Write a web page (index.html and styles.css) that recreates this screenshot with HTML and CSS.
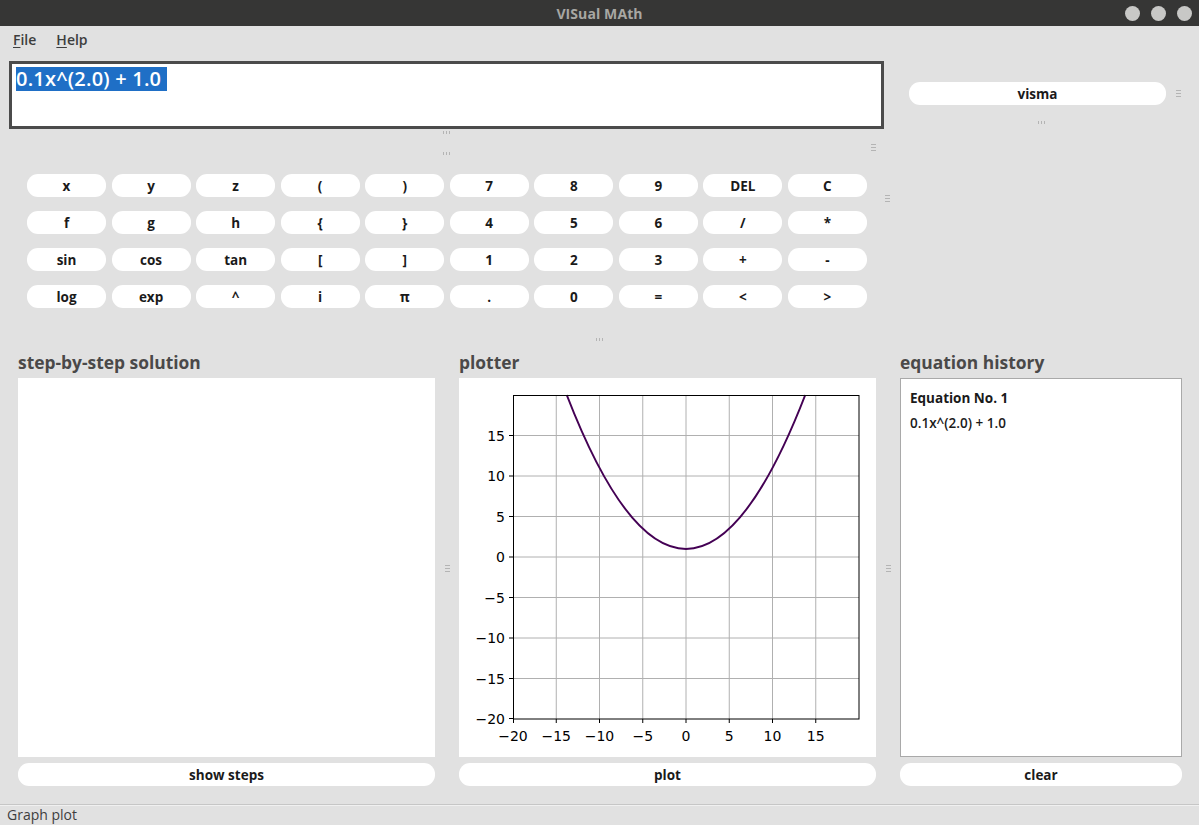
FILE: index.html
```html
<!DOCTYPE html>
<html>
<head>
<meta charset="utf-8">
<title>VISual MAth</title>
<link rel="stylesheet" href="styles.css">
</head>
<body>
<div class="window">
  <header class="titlebar">
    <span></span>
    <span class="title">VISual MAth</span>
    <span class="winbtns"><i></i><i></i><i></i></span>
  </header>
  <nav class="menubar">
    <span class="menu"><u>F</u>ile</span>
    <span class="menu"><u>H</u>elp</span>
  </nav>

  <section class="top">
    <div class="inputbox"><span class="sel">0.1x^(2.0) + 1.0 </span></div>
    <div class="side">
      <div class="siderow">
        <button class="btn visma">visma</button>
        <span class="grip-v"></span>
      </div>
      <span class="grip-h side-grip"></span>
    </div>
  </section>
  <div class="midrow">
    <div class="grips-mid"><span class="grip-h"></span><span class="grip-h"></span></div>
    <span class="grip-v mid-right"></span>
  </div>

  <section class="keyrow">
    <div class="keypad">
      <button class="btn key">x</button><button class="btn key">y</button><button class="btn key">z</button><button class="btn key">(</button><button class="btn key">)</button><button class="btn key">7</button><button class="btn key">8</button><button class="btn key">9</button><button class="btn key">DEL</button><button class="btn key">C</button>
      <button class="btn key">f</button><button class="btn key">g</button><button class="btn key">h</button><button class="btn key">{</button><button class="btn key">}</button><button class="btn key">4</button><button class="btn key">5</button><button class="btn key">6</button><button class="btn key">/</button><button class="btn key">*</button>
      <button class="btn key">sin</button><button class="btn key">cos</button><button class="btn key">tan</button><button class="btn key">[</button><button class="btn key">]</button><button class="btn key">1</button><button class="btn key">2</button><button class="btn key">3</button><button class="btn key">+</button><button class="btn key">-</button>
      <button class="btn key">log</button><button class="btn key">exp</button><button class="btn key">^</button><button class="btn key">i</button><button class="btn key">π</button><button class="btn key">.</button><button class="btn key">0</button><button class="btn key">=</button><button class="btn key">&lt;</button><button class="btn key">&gt;</button>
    </div>
    <span class="grip-v key-grip"></span>
  </section>

  <div class="hsplit"><span class="grip-h"></span></div>

  <section class="panels">
    <div class="col wide">
      <h2 class="heading">step-by-step solution</h2>
      <div class="panel"></div>
      <button class="btn action">show steps</button>
    </div>
    <div class="vsplit"><span class="grip-v"></span></div>
    <div class="col wide">
      <h2 class="heading">plotter</h2>
      <div class="panel">
        <svg class="plot" width="417" height="379" viewBox="0 0 417 379" xmlns="http://www.w3.org/2000/svg">
          <g stroke="#b0b0b0" stroke-width="1">
            <line x1="97.25" y1="17" x2="97.25" y2="341"/>
            <line x1="140.5" y1="17" x2="140.5" y2="341"/>
            <line x1="183.75" y1="17" x2="183.75" y2="341"/>
            <line x1="227" y1="17" x2="227" y2="341"/>
            <line x1="270.25" y1="17" x2="270.25" y2="341"/>
            <line x1="313.5" y1="17" x2="313.5" y2="341"/>
            <line x1="356.75" y1="17" x2="356.75" y2="341"/>
            <line x1="54" y1="57.5" x2="400" y2="57.5"/>
            <line x1="54" y1="98" x2="400" y2="98"/>
            <line x1="54" y1="138.5" x2="400" y2="138.5"/>
            <line x1="54" y1="179" x2="400" y2="179"/>
            <line x1="54" y1="219.5" x2="400" y2="219.5"/>
            <line x1="54" y1="260" x2="400" y2="260"/>
            <line x1="54" y1="300.5" x2="400" y2="300.5"/>
          </g>
          <path d="M107.77 17 Q227 324.8 346.23 17" fill="none" stroke="#440154" stroke-width="2"/>
          <rect x="54.5" y="17.5" width="345.5" height="323.5" fill="none" stroke="#000" stroke-width="1"/>
          <g stroke="#000" stroke-width="1">
            <line x1="54.5" y1="341" x2="54.5" y2="345"/>
            <line x1="97.25" y1="341" x2="97.25" y2="345"/>
            <line x1="140.5" y1="341" x2="140.5" y2="345"/>
            <line x1="183.75" y1="341" x2="183.75" y2="345"/>
            <line x1="227" y1="341" x2="227" y2="345"/>
            <line x1="270.25" y1="341" x2="270.25" y2="345"/>
            <line x1="313.5" y1="341" x2="313.5" y2="345"/>
            <line x1="356.75" y1="341" x2="356.75" y2="345"/>
            <line x1="50" y1="57.5" x2="54" y2="57.5"/>
            <line x1="50" y1="98" x2="54" y2="98"/>
            <line x1="50" y1="138.5" x2="54" y2="138.5"/>
            <line x1="50" y1="179" x2="54" y2="179"/>
            <line x1="50" y1="219.5" x2="54" y2="219.5"/>
            <line x1="50" y1="260" x2="54" y2="260"/>
            <line x1="50" y1="300.5" x2="54" y2="300.5"/>
            <line x1="50" y1="340.5" x2="54" y2="340.5"/>
          </g>
          <g class="ticklabel" text-anchor="end">
            <text x="46" y="62.5">15</text>
            <text x="46" y="103">10</text>
            <text x="46" y="143.5">5</text>
            <text x="46" y="184">0</text>
            <text x="46" y="224.5">−5</text>
            <text x="46" y="265">−10</text>
            <text x="46" y="305.5">−15</text>
            <text x="46" y="346">−20</text>
          </g>
          <g class="ticklabel" text-anchor="middle">
            <text x="54" y="363">−20</text>
            <text x="97.25" y="363">−15</text>
            <text x="140.5" y="363">−10</text>
            <text x="183.75" y="363">−5</text>
            <text x="227" y="363">0</text>
            <text x="270.25" y="363">5</text>
            <text x="313.5" y="363">10</text>
            <text x="356.75" y="363">15</text>
          </g>
        </svg>
      </div>
      <button class="btn action">plot</button>
    </div>
    <div class="vsplit"><span class="grip-v"></span></div>
    <div class="col narrow">
      <h2 class="heading">equation history</h2>
      <div class="panel history">
        <p class="hist-title">Equation No. 1</p>
        <p class="hist-eq">0.1x^(2.0) + 1.0</p>
      </div>
      <button class="btn action">clear</button>
    </div>
  </section>

  <footer class="statusbar">Graph plot</footer>
</div>
</body>
</html>
```

FILE: styles.css
```css
* { box-sizing: border-box; }
html, body {
  margin: 0;
  padding: 0;
  width: 1199px;
  height: 825px;
  overflow: hidden;
  background: #e1e1e1;
}
body {
  font-family: "Open Sans", "DejaVu Sans", sans-serif;
  color: #1c1c1c;
}
.window {
  display: flex;
  flex-direction: column;
  height: 825px;
}
.titlebar {
  height: 26px;
  flex: none;
  background: #363635;
  display: grid;
  grid-template-columns: 1fr auto 1fr;
  align-items: center;
}
.title {
  color: #a8a7a3;
  font-weight: 700;
  font-size: 14px;
  letter-spacing: 0.1px;
}
.winbtns {
  justify-self: end;
  display: flex;
  gap: 11px;
  padding-right: 7px;
}
.winbtns i {
  display: block;
  width: 15px;
  height: 15px;
  border-radius: 50%;
  background: #c8c8c6;
}
.menubar {
  height: 26px;
  flex: none;
  display: flex;
  align-items: center;
  padding-left: 13px;
  gap: 20px;
  font-size: 14px;
  font-weight: 600;
  color: #3d3d3d;
}
.menu u { text-decoration: underline; text-underline-offset: 2px; }

/* splitter grips */
.grip-v {
  display: block;
  flex: none;
  width: 5px;
  height: 7px;
  background: repeating-linear-gradient(to bottom, #b4b4b4 0 1px, transparent 1px 3px);
}
.grip-h {
  display: block;
  flex: none;
  width: 7px;
  height: 3px;
  background: repeating-linear-gradient(to right, #b4b4b4 0 1px, transparent 1px 3px);
}

.top {
  flex: none;
  display: flex;
  margin-top: 9px;
  padding-left: 9px;
  height: 68px;
}
.inputbox {
  width: 875px;
  height: 68px;
  border: 3px solid #4b4b4b;
  background: #fff;
  padding: 3px 0 0 4px;
  font-size: 20px;
  font-weight: 600;
  letter-spacing: 0.2px;
  line-height: 24px;
}
.sel {
  background: #1f6fc6;
  color: #fff;
  white-space: pre;
  display: inline-block;
  height: 24px;
}
.side {
  display: flex;
  flex-direction: column;
  align-items: flex-start;
  padding-left: 25px;
  padding-top: 21px;
}
.siderow {
  display: flex;
  align-items: center;
  gap: 10px;
}
.side-grip { margin-top: 16px; margin-left: 129px; }

.midrow {
  flex: none;
  height: 45px;
  display: flex;
  padding-left: 9px;
}
.grips-mid {
  width: 875px;
  display: flex;
  flex-direction: column;
  align-items: center;
  padding-top: 2px;
  gap: 18px;
}
.mid-right { margin-left: -13px; margin-top: 15px; }

.btn {
  border: none;
  background: #fff;
  font-family: inherit;
  font-weight: 700;
  font-size: 13.5px;
  color: #1a1a1a;
  padding: 0;
  cursor: default;
}
.visma {
  width: 257px;
  height: 23px;
  border-radius: 11px;
}
.keyrow {
  flex: none;
  display: flex;
  padding-left: 27px;
  height: 134px;
}
.keypad {
  display: grid;
  grid-template-columns: repeat(10, 79px);
  grid-auto-rows: 23px;
  column-gap: 5.56px;
  row-gap: 14px;
}
.key {
  border-radius: 11px;
  height: 23px;
}
.key-grip { margin-left: 18px; margin-top: 21px; }

.hsplit {
  flex: none;
  height: 42px;
  display: flex;
  justify-content: center;
  padding-top: 30px;
}

.panels {
  flex: none;
  display: flex;
  padding-left: 18px;
}
.vsplit {
  width: 24px;
  display: flex;
  align-items: center;
  justify-content: center;
}
.col {
  display: flex;
  flex-direction: column;
}
.col.wide { width: 417px; }
.col.narrow { width: 282px; }
.heading {
  margin: 0;
  height: 28px;
  font-size: 17.4px;
  line-height: 24px;
  font-weight: 700;
  color: #4a4949;
}
.panel {
  height: 379px;
  background: #fff;
}
.plot { display: block; }
.ticklabel text {
  font-family: "DejaVu Sans", sans-serif;
  font-size: 14px;
  fill: #000;
}
.history {
  border: 1px solid #a9a9a9;
  padding: 7px 9px;
}
.history p {
  margin: 0;
  font-size: 13.5px;
  line-height: 25px;
  font-weight: 600;
  color: #1a1a1a;
}
.history .hist-title { font-weight: 700; }
.action {
  margin-top: 6px;
  height: 23px;
  border-radius: 11px;
}

.statusbar {
  flex: none;
  margin-top: auto;
  height: 21px;
  border-top: 1px solid #c6c6c6;
  box-shadow: inset 0 1px 0 #f0f0f0;
  padding-left: 7px;
  font-size: 14px;
  line-height: 20px;
  color: #3e3e3e;
}
```
